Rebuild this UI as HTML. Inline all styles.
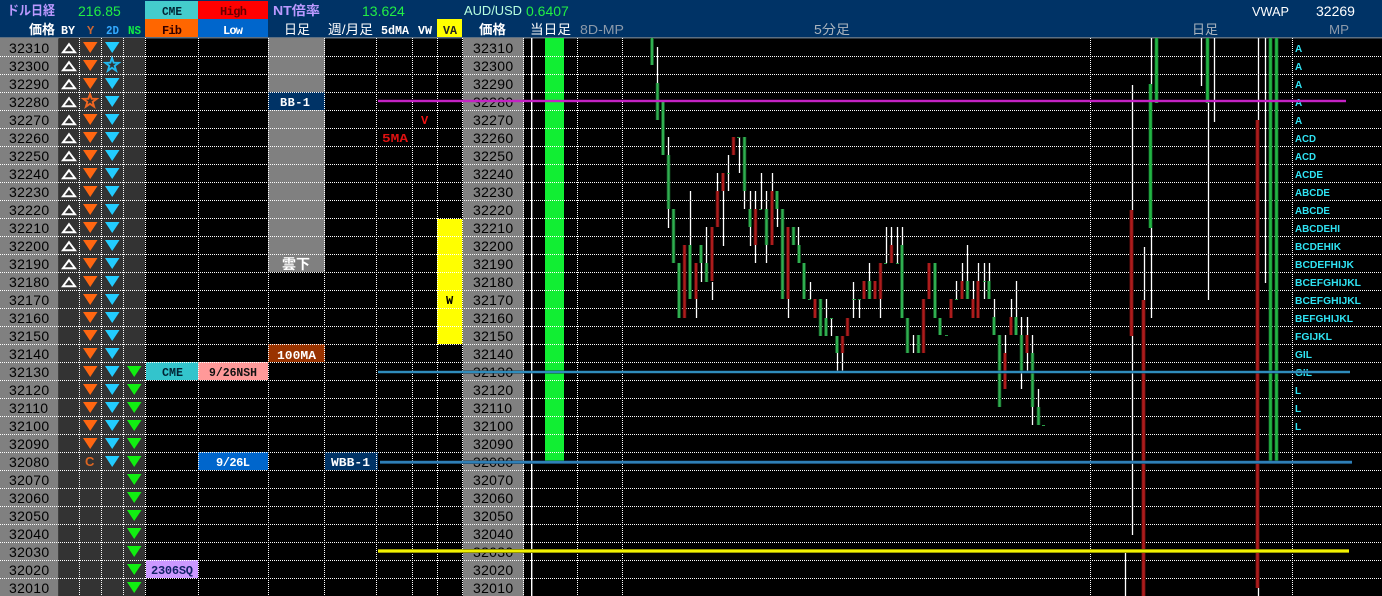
<!DOCTYPE html>
<html><head><meta charset="utf-8"><style>
html,body{margin:0;padding:0;background:#000;width:1382px;height:596px;overflow:hidden}
svg{display:block}
text{font-family:"Liberation Sans","Noto Sans CJK JP",sans-serif}
.p{font-size:14px;fill:#000;letter-spacing:.3px}
.h{font-size:13px;font-weight:bold}
.m{font-family:"Liberation Mono","Noto Sans CJK JP",monospace;font-size:12px;font-weight:bold}
.g{font-size:14px;fill:#22ee44}
.a{font-size:10px;font-weight:bold;fill:#30e4f4}
</style></head><body>
<svg width="1382" height="596" viewBox="0 0 1382 596" xmlns="http://www.w3.org/2000/svg">
<defs>
<pattern id="to" patternUnits="userSpaceOnUse" x="83" y="38" width="15" height="18"><path d="M0 4H14.5L7.2 15Z" fill="#ff6611"/></pattern>
<pattern id="tc" patternUnits="userSpaceOnUse" x="105" y="38" width="15" height="18"><path d="M0 4H14.5L7.2 15Z" fill="#22ccff"/></pattern>
<pattern id="tg" patternUnits="userSpaceOnUse" x="127" y="38" width="15" height="18"><path d="M0 4H14.5L7.2 15Z" fill="#11ee11"/></pattern>
<pattern id="tw" patternUnits="userSpaceOnUse" x="60" y="38" width="18" height="18"><path d="M9 6.2L15 14.2H3Z" fill="none" stroke="#fff" stroke-width="2"/></pattern>
</defs>
<rect width="1382" height="596" fill="#000"/>
<!-- header -->
<rect width="1382" height="37" fill="#003366"/>
<rect y="37" width="1382" height="1.5" fill="#5c6f82"/>
<rect x="145" y="1" width="53" height="18" fill="#44cccc"/>
<rect x="198" y="1" width="70" height="18" fill="#ff0000"/>
<rect x="145" y="19" width="53" height="18" fill="#ff6600"/>
<rect x="198" y="19" width="70" height="18" fill="#0066cc"/>
<rect x="437" y="19" width="25" height="18" fill="#ffff00"/>
<!-- body bg -->
<rect y="38" width="58.5" height="558" fill="#808080"/>
<rect x="59" y="38" width="86" height="558" fill="#333"/>
<rect x="463" y="38" width="61" height="558" fill="#808080"/>
<rect x="268" y="38" width="57" height="234" fill="#808080"/>
<rect x="268" y="92" width="57" height="18" fill="#003366"/>
<rect x="268" y="344" width="57" height="18" fill="#993300"/>
<rect x="146" y="362" width="52" height="18" fill="#33c4cc"/>
<rect x="198" y="362" width="70" height="18" fill="#ff9999"/>
<rect x="198" y="452" width="70" height="18" fill="#0066cc"/>
<rect x="325" y="452" width="53" height="18" fill="#003366"/>
<rect x="146" y="560" width="52" height="18" fill="#cc99ff"/>
<rect x="437" y="219" width="25.5" height="125" fill="#ffff00"/>
<rect x="545" y="38" width="19" height="424" fill="#11ee33"/>
<!-- triangles -->
<rect x="60" y="38" width="18" height="252" fill="url(#tw)"/>
<rect x="83" y="38" width="15" height="414" fill="url(#to)"/>
<rect x="80" y="92" width="20" height="18" fill="#333"/>
<rect x="105" y="38" width="15" height="432" fill="url(#tc)"/>
<rect x="102" y="56" width="20" height="18" fill="#333"/>
<rect x="127" y="362" width="15" height="234" fill="url(#tg)"/>
<path transform="translate(90 101)" d="M0-7L1.65-2.27 6.66-2.16 2.66.87 4.11 5.66 0 2.8-4.11 5.66-2.66.87-6.66-2.16-1.65-2.27Z" fill="none" stroke="#ee6622" stroke-width="1.9"/>
<path transform="translate(112 65)" d="M0-7L1.65-2.27 6.66-2.16 2.66.87 4.11 5.66 0 2.8-4.11 5.66-2.66.87-6.66-2.16-1.65-2.27Z" fill="none" stroke="#22b8ee" stroke-width="1.9"/>
<text x="85" y="466" font-size="13" font-weight="bold" fill="#dd6622">C</text>
<!-- grid -->
<path stroke="#fff" stroke-width="1" stroke-dasharray="1 1" fill="none" d="M0 56.5H1382M0 74.5H1382M0 92.5H1382M0 110.5H1382M0 128.5H1382M0 146.5H1382M0 164.5H1382M0 182.5H1382M0 200.5H1382M0 218.5H1382M0 236.5H1382M0 254.5H1382M0 272.5H1382M0 290.5H1382M0 308.5H1382M0 326.5H1382M0 344.5H1382M0 362.5H1382M0 380.5H1382M0 398.5H1382M0 416.5H1382M0 434.5H1382M0 452.5H1382M0 470.5H1382M0 488.5H1382M0 506.5H1382M0 524.5H1382M0 542.5H1382M0 560.5H1382M0 578.5H1382"/>
<path stroke="#fff" stroke-width="1" stroke-dasharray="1 1" fill="none" d="M79.5 38V596M101.5 38V596M123.5 38V596M145.5 38V596M198.5 38V596M268.5 38V596M324.5 38V596M376.5 38V596M412.5 38V596M437.5 38V596M462.5 38V596M523.5 38V596M577.5 38V596M622.5 38V596M1090.5 38V596M1292.5 38V596"/>
<rect x="531" y="38" width="1.4" height="558" fill="#fff"/>
<!-- 5-min candles -->
<path stroke="#fff" stroke-width="1.3" fill="none" d="M657.5 47V83M668.5 137V155M668.5 209V228M690.5 191V245M696.5 299V318M701.5 263V282M706.5 227V263M712.5 282V300M717.5 173V191M723.5 191V246M728.5 155V191M739.5 137V173M744.5 191V209M750.5 191V209M750.5 227V246M755.5 191V209M755.5 245V263M761.5 173V209M766.5 191V209M766.5 245V263M772.5 173V191M777.5 209V227M788.5 299V318M798.5 227V245M810.5 282V299M826.5 299V318M831.5 318V336M837.5 353V372M842.5 353V372M853.5 282V318M859.5 299V318M869.5 263V281M880.5 299V318M886.5 227V263M891.5 227V245M897.5 227V263M902.5 227V245M913.5 335V353M956.5 281V299M962.5 263V281M967.5 245V281M973.5 281V299M978.5 263V281M984.5 263V299M989.5 263V281M994.5 299V317M1005.5 335V353M1011.5 299V317M1016.5 281V317M1021.5 317V335M1021.5 372V389M1027.5 317V335M1027.5 353V372M1032.5 335V353M1032.5 407V425M1038.5 389V407"/>
<path stroke="#0f4a1f" stroke-width="3.8" fill="none" d="M652 38V65M657.5 83V120M663 102V155M668.5 155V209M673.5 209V263M679 263V318M690 245V299M701 245V263M706.5 263V282M744.5 137V191M750 209V227M766.5 209V245M777 191V209M782.5 209V299M793.5 227V245M799 245V263M804 263V299M820.5 299V336M826 318V336M837 336V353M869.5 281V299M902 245V318M907.5 318V353M918.5 335V353M935 263V318M940 318V335M967.5 281V299M989 281V299M994 317V335M999.5 335V407M1016 317V335M1021.5 335V372M1032.5 353V407M1038.5 407V425"/>
<path stroke="#30ae50" stroke-width="2.3" fill="none" d="M652 38V65M657.5 83V120M663 102V155M668.5 155V209M673.5 209V263M679 263V318M690 245V299M701 245V263M706.5 263V282M744.5 137V191M750 209V227M766.5 209V245M777 191V209M782.5 209V299M793.5 227V245M799 245V263M804 263V299M820.5 299V336M826 318V336M837 336V353M869.5 281V299M902 245V318M907.5 318V353M918.5 335V353M935 263V318M940 318V335M967.5 281V299M989 281V299M994 317V335M999.5 335V407M1016 317V335M1021.5 335V372M1032.5 353V407M1038.5 407V425"/>
<path stroke="#4a0a0a" stroke-width="3.8" fill="none" d="M684.5 245V318M696 263V299M712 227V281M717.5 191V227M723 173V191M733.5 137V155M755.5 209V245M772 191V245M788 227V299M815 299V318M842.5 336V353M847.5 318V336M864 281V299M875 281V299M880.5 263V299M891.5 245V263M923.5 299V353M929 263V299M951 299V318M962 281V299M973 299V318M978 281V318M1005 353V389M1011 317V335M1027 335V353"/>
<path stroke="#ac1c1c" stroke-width="2.3" fill="none" d="M684.5 245V318M696 263V299M712 227V281M717.5 191V227M723 173V191M733.5 137V155M755.5 209V245M772 191V245M788 227V299M815 299V318M842.5 336V353M847.5 318V336M864 281V299M875 281V299M880.5 263V299M891.5 245V263M923.5 299V353M929 263V299M951 299V318M962 281V299M973 299V318M978 281V318M1005 353V389M1011 317V335M1027 335V353"/>
<path stroke="#2a9d47" stroke-width="1" fill="none" d="M727 173.5h3M737 137.5h3M759 209.5h3M808 299.5h3M830 318.5h3M852 299.5h4M858 299.5h3M884 263.5h3M896 263.5h3M945 335.5h3M955 299.5h3M983 281.5h3M1042 425.5h3"/>
<!-- daily candles -->
<path stroke="#fff" stroke-width="1.3" fill="none" d="M1132.5 85V210M1132.5 336V535M1125.5 552V596M1144.5 247V300M1151.5 38V84M1151.5 228V318M1201.5 38V86M1208.5 103V300M1214.5 38V122M1258.5 38V120M1258.5 588V596M1265.5 38V283"/>
<path stroke="#0e5a22" stroke-width="4" fill="none" d="M1150.5 84V228M1156.5 38V103M1207.5 38V103M1270.5 38V462M1276.5 38V462"/>
<path stroke="#22b544" stroke-width="2.6" fill="none" d="M1150.5 84V228M1156.5 38V103M1207.5 38V103M1270.5 38V462M1276.5 38V462"/>
<path stroke="#560c0c" stroke-width="4.2" fill="none" d="M1131.5 210V336M1143.5 300V596M1257.5 120V588"/>
<path stroke="#ac1c1c" stroke-width="2.6" fill="none" d="M1131.5 210V336M1143.5 300V596M1257.5 120V588"/>
<!-- header text -->
<text class="h" x="7" y="15" fill="#bb99ff" textLength="48" lengthAdjust="spacingAndGlyphs">ドル日経</text>
<text class="g" x="78" y="16">216.85</text>
<text class="m" x="162" y="15" fill="#002233" textLength="20" lengthAdjust="spacingAndGlyphs">CME</text>
<text class="m" x="220" y="15" fill="#660000" textLength="27" lengthAdjust="spacing">High</text>
<text class="h" x="273" y="15" fill="#bb99ff" textLength="47" lengthAdjust="spacingAndGlyphs">NT倍率</text>
<text class="g" x="362" y="16">13.624</text>
<text x="464" y="15" font-size="13" fill="#b8ffe0" textLength="58" lengthAdjust="spacingAndGlyphs">AUD/USD</text>
<text class="g" x="526" y="16">0.6407</text>
<text x="1252" y="16" font-size="13" fill="#fff" textLength="37" lengthAdjust="spacingAndGlyphs">VWAP</text>
<text x="1316" y="16" font-size="14" fill="#fff">32269</text>
<text class="h" x="29" y="34" fill="#fff" textLength="26" lengthAdjust="spacingAndGlyphs">価格</text>
<text class="m" x="61" y="34" fill="#fff" textLength="14" lengthAdjust="spacingAndGlyphs">BY</text>
<text class="m" x="87" y="34" fill="#cc6633">Y</text>
<text class="m" x="106" y="34" fill="#33aaff" textLength="13" lengthAdjust="spacingAndGlyphs">2D</text>
<text class="m" x="128" y="34" fill="#11ee44" textLength="13" lengthAdjust="spacingAndGlyphs">NS</text>
<text class="m" x="162" y="34" fill="#330000" textLength="20" lengthAdjust="spacing">Fib</text>
<text class="m" x="223" y="34" fill="#fff" textLength="20" lengthAdjust="spacing">Low</text>
<text x="284" y="34" font-size="13" fill="#fff" textLength="26" lengthAdjust="spacingAndGlyphs">日足</text>
<text x="328" y="34" font-size="13" fill="#fff" textLength="45" lengthAdjust="spacingAndGlyphs">週/月足</text>
<text class="m" x="381" y="34" fill="#fff" textLength="28" lengthAdjust="spacingAndGlyphs">5dMA</text>
<text class="m" x="418" y="34" fill="#fff" textLength="14" lengthAdjust="spacingAndGlyphs">VW</text>
<text class="m" x="443" y="34" fill="#222" textLength="14" lengthAdjust="spacingAndGlyphs">VA</text>
<text class="h" x="479" y="34" fill="#fff" textLength="27" lengthAdjust="spacingAndGlyphs">価格</text>
<text x="530" y="34" font-size="13" fill="#fff" textLength="41" lengthAdjust="spacingAndGlyphs">当日足</text>
<text x="580" y="34" font-size="13" fill="#8c9aaa" textLength="44" lengthAdjust="spacingAndGlyphs">8D-MP</text>
<text x="814" y="34" font-size="13" fill="#aab4be" textLength="36" lengthAdjust="spacingAndGlyphs">5分足</text>
<text x="1192" y="34" font-size="13" fill="#aab4be" textLength="26" lengthAdjust="spacingAndGlyphs">日足</text>
<text x="1329" y="34" font-size="13" fill="#8c9aaa" textLength="20" lengthAdjust="spacingAndGlyphs">MP</text>
<!-- prices left -->
<text class="p" x="9" y="53">32310</text><text class="p" x="9" y="71">32300</text><text class="p" x="9" y="89">32290</text><text class="p" x="9" y="107">32280</text><text class="p" x="9" y="125">32270</text><text class="p" x="9" y="143">32260</text><text class="p" x="9" y="161">32250</text><text class="p" x="9" y="179">32240</text><text class="p" x="9" y="197">32230</text><text class="p" x="9" y="215">32220</text><text class="p" x="9" y="233">32210</text><text class="p" x="9" y="251">32200</text><text class="p" x="9" y="269">32190</text><text class="p" x="9" y="287">32180</text><text class="p" x="9" y="305">32170</text><text class="p" x="9" y="323">32160</text><text class="p" x="9" y="341">32150</text><text class="p" x="9" y="359">32140</text><text class="p" x="9" y="377">32130</text><text class="p" x="9" y="395">32120</text><text class="p" x="9" y="413">32110</text><text class="p" x="9" y="431">32100</text><text class="p" x="9" y="449">32090</text><text class="p" x="9" y="467">32080</text><text class="p" x="9" y="485">32070</text><text class="p" x="9" y="503">32060</text><text class="p" x="9" y="521">32050</text><text class="p" x="9" y="539">32040</text><text class="p" x="9" y="557">32030</text><text class="p" x="9" y="575">32020</text><text class="p" x="9" y="593">32010</text>
<!-- prices right -->
<text class="p" x="473" y="53">32310</text><text class="p" x="473" y="71">32300</text><text class="p" x="473" y="89">32290</text><text class="p" x="473" y="107">32280</text><text class="p" x="473" y="125">32270</text><text class="p" x="473" y="143">32260</text><text class="p" x="473" y="161">32250</text><text class="p" x="473" y="179">32240</text><text class="p" x="473" y="197">32230</text><text class="p" x="473" y="215">32220</text><text class="p" x="473" y="233">32210</text><text class="p" x="473" y="251">32200</text><text class="p" x="473" y="269">32190</text><text class="p" x="473" y="287">32180</text><text class="p" x="473" y="305">32170</text><text class="p" x="473" y="323">32160</text><text class="p" x="473" y="341">32150</text><text class="p" x="473" y="359">32140</text><text class="p" x="473" y="377">32130</text><text class="p" x="473" y="395">32120</text><text class="p" x="473" y="413">32110</text><text class="p" x="473" y="431">32100</text><text class="p" x="473" y="449">32090</text><text class="p" x="473" y="467">32080</text><text class="p" x="473" y="485">32070</text><text class="p" x="473" y="503">32060</text><text class="p" x="473" y="521">32050</text><text class="p" x="473" y="539">32040</text><text class="p" x="473" y="557">32030</text><text class="p" x="473" y="575">32020</text><text class="p" x="473" y="593">32010</text>
<!-- labels -->
<text class="m" x="280" y="106" fill="#fff" textLength="30" lengthAdjust="spacing">BB-1</text>
<text x="282" y="269" font-size="14" font-weight="bold" fill="#fff" textLength="28">雲下</text>
<text class="m" x="277" y="359" fill="#fff" textLength="39" lengthAdjust="spacingAndGlyphs">100MA</text>
<text class="m" x="162" y="376" fill="#002233" textLength="21" lengthAdjust="spacingAndGlyphs">CME</text>
<text class="m" x="209" y="376" fill="#111" textLength="48" lengthAdjust="spacingAndGlyphs">9/26NSH</text>
<text class="m" x="216" y="466" fill="#fff" textLength="34" lengthAdjust="spacing">9/26L</text>
<text class="m" x="331" y="466" fill="#fff" textLength="39" lengthAdjust="spacingAndGlyphs">WBB-1</text>
<text class="m" x="151" y="574" fill="#112266" textLength="42" lengthAdjust="spacing">2306SQ</text>
<text class="m" x="382" y="142" fill="#dd1111" textLength="26" lengthAdjust="spacingAndGlyphs">5MA</text>
<text class="m" x="421" y="124" fill="#ee1111">V</text>
<text class="m" x="446" y="304" fill="#000">W</text>
<!-- MP -->
<text class="a" x="1295" y="52">A</text><text class="a" x="1295" y="70">A</text><text class="a" x="1295" y="88">A</text><text class="a" x="1295" y="106">A</text><text class="a" x="1295" y="124">A</text><text class="a" x="1295" y="142" textLength="21" lengthAdjust="spacingAndGlyphs">ACD</text><text class="a" x="1295" y="160" textLength="21" lengthAdjust="spacingAndGlyphs">ACD</text><text class="a" x="1295" y="178" textLength="28" lengthAdjust="spacingAndGlyphs">ACDE</text><text class="a" x="1295" y="196" textLength="35" lengthAdjust="spacingAndGlyphs">ABCDE</text><text class="a" x="1295" y="214" textLength="35" lengthAdjust="spacingAndGlyphs">ABCDE</text><text class="a" x="1295" y="232" textLength="45" lengthAdjust="spacingAndGlyphs">ABCDEHI</text><text class="a" x="1295" y="250" textLength="46" lengthAdjust="spacingAndGlyphs">BCDEHIK</text><text class="a" x="1295" y="268" textLength="59" lengthAdjust="spacingAndGlyphs">BCDEFHIJK</text><text class="a" x="1295" y="286" textLength="66" lengthAdjust="spacingAndGlyphs">BCEFGHIJKL</text><text class="a" x="1295" y="304" textLength="66" lengthAdjust="spacingAndGlyphs">BCEFGHIJKL</text><text class="a" x="1295" y="322" textLength="58" lengthAdjust="spacingAndGlyphs">BEFGHIJKL</text><text class="a" x="1295" y="340" textLength="37" lengthAdjust="spacingAndGlyphs">FGIJKL</text><text class="a" x="1295" y="358" textLength="17" lengthAdjust="spacingAndGlyphs">GIL</text><text class="a" x="1295" y="376" textLength="17" lengthAdjust="spacingAndGlyphs">GIL</text><text class="a" x="1295" y="394">L</text><text class="a" x="1295" y="412">L</text><text class="a" x="1295" y="430">L</text>
<!-- horizontal level lines -->
<rect x="378" y="99.8" width="968" height="2.4" fill="#c422c4"/>
<rect x="378" y="370.5" width="972" height="3" fill="#14405a"/>
<rect x="378" y="371" width="972" height="2" fill="#2f8cbc"/>
<rect x="380" y="460.5" width="972" height="3.4" fill="#143c5c"/>
<rect x="380" y="461" width="972" height="2.4" fill="#2f7fb6"/>
<rect x="378" y="549" width="971" height="4" fill="#9a9a00"/>
<rect x="378" y="550" width="971" height="2" fill="#f0f000"/>
</svg>
</body></html>
